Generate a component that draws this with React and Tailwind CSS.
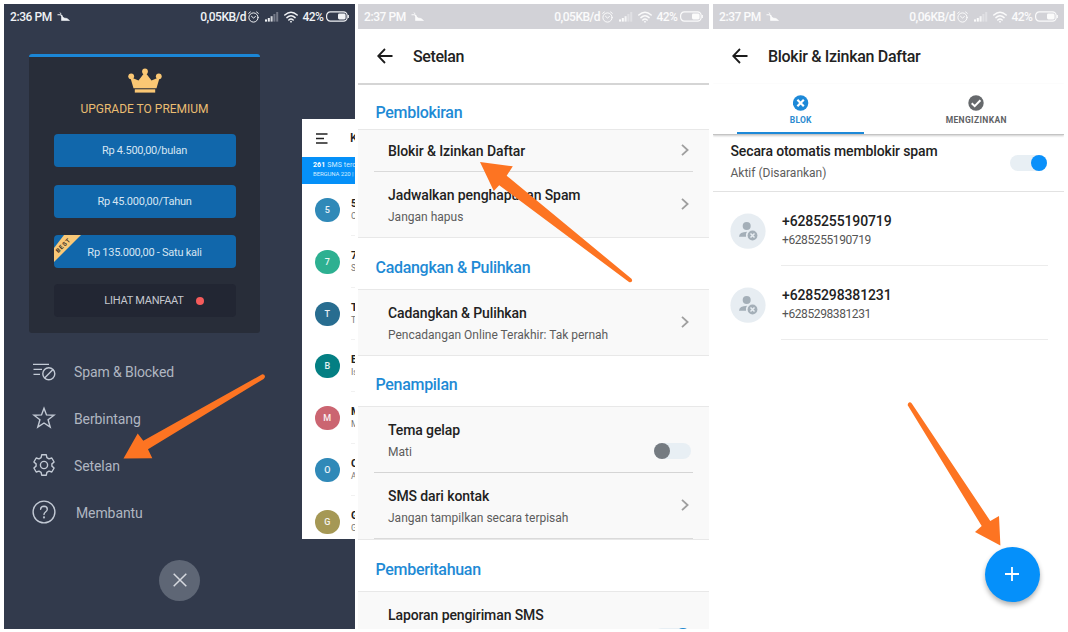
function StatusBar({ time, rate, className }) {
  return (
    <div className={`flex h-[25px] shrink-0 items-center pl-1.5 pr-[6px] text-[12px] font-medium leading-none ${className}`}>
      <span className="w-[42px] shrink-0 whitespace-nowrap tracking-[-0.4px]">{time}</span>
      <svg className="ml-[5px] shrink-0" width="13" height="10" viewBox="0 0 13 10" fill="none" stroke="currentColor">
        <path d="M3 0.5 L4.2 2.2" strokeWidth="0.9" />
        <path d="M0.5 2.8 H3.5 L5.5 4.2" strokeWidth="1.1" />
        <path d="M4.5 3.5 L7 6 L10 6.5 L12.5 8.5 H4.5 Z" fill="currentColor" strokeWidth="0.6" />
      </svg>
      <span className="ml-auto whitespace-nowrap tracking-[-0.5px]">{rate}</span>
      <svg className="ml-[2px] shrink-0" width="11" height="12" viewBox="0 0 11 12" fill="none" stroke="currentColor" strokeLinecap="round">
        <circle cx="5.5" cy="6.5" r="4.6" strokeWidth="1" />
        <path d="M0.7 2.3 L2.4 1 M10.3 2.3 L8.6 1 M3.5 5.3 L5.5 7 L7.4 5.6" strokeWidth="1" />
      </svg>
      <svg className="ml-[6px] shrink-0" width="14" height="10" viewBox="0 0 14 10" fill="currentColor">
        <rect x="0" y="7.4" width="2" height="2.2" />
        <rect x="2.8" y="6" width="2" height="3.6" />
        <rect x="5.6" y="4.2" width="2" height="5.4" opacity="0.85" />
        <rect x="8.4" y="2" width="2" height="7.6" opacity="0.35" />
        <rect x="11.2" y="0" width="2" height="9.6" opacity="0.35" />
      </svg>
      <svg className="ml-[5px] shrink-0" width="14" height="12" viewBox="0 0 14 12" fill="none" stroke="currentColor" strokeLinecap="round">
        <path d="M0.8 4 Q7 -1.6 13.2 4" strokeWidth="1.5" />
        <path d="M2.9 6.6 Q7 2.8 11.1 6.6" strokeWidth="1.5" />
        <path d="M4.8 9 Q7 7 9.2 9" strokeWidth="1.5" />
        <circle cx="7" cy="10.7" r="0.9" fill="currentColor" stroke="none" />
      </svg>
      <span className="ml-[4.5px] w-[20.5px] shrink-0 whitespace-nowrap tracking-[-0.6px]">42%</span>
      <svg className="ml-[3px] shrink-0" width="23" height="11" viewBox="0 0 23 11" fill="none">
        <rect x="0.6" y="0.9" width="20.6" height="9.2" rx="3.8" stroke="currentColor" strokeWidth="1.2" />
        <rect x="12" y="2.6" width="7.6" height="5.8" rx="1.4" fill="currentColor" />
        <path d="M22.4 4 V7" stroke="currentColor" strokeWidth="1" />
      </svg>
    </div>
  );
}

function PriceButton({ children, best }) {
  return (
    <div className="relative flex h-[33px] items-center justify-center overflow-hidden rounded-[4px] bg-[#1167ab] pt-[2px] text-[11px] tracking-[-0.25px] text-[#d5e5f2]">
      {best && (
        <svg className="absolute left-0 top-0" width="28" height="28" viewBox="0 0 28 28">
          <path d="M0 13 L10 0 H27 L0 27 Z" fill="#f9c877" />
          <text x="9.6" y="10.6" transform="rotate(-45 9.6 10.6)" textAnchor="middle" dominantBaseline="middle" fontSize="6" fontWeight="700" letterSpacing="0.9" fill="#3c3427">
            BEST
          </text>
        </svg>
      )}
      <span>{children}</span>
    </div>
  );
}

function MenuItem({ icon, label, className = "" }) {
  return (
    <div className="flex h-[47px] items-center">
      <div className="flex w-6 shrink-0 items-center justify-center pb-[3px]">{icon}</div>
      <span className={`ml-[18px] text-[14px] tracking-[-0.1px] text-[#b0b6c1] ${className}`}>{label}</span>
    </div>
  );
}

function SpamIcon() {
  return (
    <svg width="24" height="24" viewBox="0 0 24 24" fill="none" stroke="#c3cad5" strokeWidth="1.4">
      <path d="M1 5.4 H17 M1.5 10.4 H10 M1.5 15.4 H8" />
      <circle cx="16.8" cy="14.8" r="6" />
      <path d="M12.6 19 L21 10.6" />
    </svg>
  );
}

function StarIcon() {
  return (
    <svg width="24" height="24" viewBox="0 0 24 24" fill="none" stroke="#c3cad5" strokeWidth="1.4">
      <path d="M12 2.2 L14.5 8.9 L22 9.2 L16.1 13.7 L18.2 21.2 L12 17 L5.8 21.2 L7.9 13.7 L2 9.2 L9.5 8.9 Z" />
    </svg>
  );
}

function GearIcon() {
  return (
    <svg width="24" height="24" viewBox="0 0 24 24" fill="none" stroke="#c3cad5" strokeWidth="1.4" strokeLinejoin="round">
      <path d="M9.7 1.8 H14.3 L14.9 4.7 L17 5.9 L19.8 5 L22.1 9 L19.9 10.9 V13.1 L22.1 15 L19.8 19 L17 18.1 L14.9 19.3 L14.3 22.2 H9.7 L9.1 19.3 L7 18.1 L4.2 19 L1.9 15 L4.1 13.1 V10.9 L1.9 9 L4.2 5 L7 5.9 L9.1 4.7 Z" />
      <circle cx="12" cy="12" r="3.6" />
    </svg>
  );
}

function HelpIcon() {
  return (
    <svg width="24" height="24" viewBox="0 0 24 24" fill="none" stroke="#c3cad5" strokeWidth="1.4" strokeLinecap="round">
      <circle cx="12" cy="12" r="10.9" />
      <path d="M8.6 9.3 Q8.8 6.2 12 6.2 Q15.3 6.3 15.3 9.2 Q15.2 10.9 13.5 12 Q12 13 12 14.6" />
      <circle cx="12" cy="17.4" r="0.4" fill="#c3cad5" />
    </svg>
  );
}

const chats = [
  { letter: "5", color: "bg-[#3089b8]", name: "50", text: "Cek" },
  { letter: "7", color: "bg-[#2db091]", name: "77", text: "Se" },
  { letter: "T", color: "bg-[#286d90]", name: "Te", text: "Te" },
  { letter: "B", color: "bg-[#047f83]", name: "BR", text: "Isi" },
  { letter: "M", color: "bg-[#cb6571]", name: "M", text: "M" },
  { letter: "O", color: "bg-[#3089b8]", name: "OT", text: "An" },
  { letter: "G", color: "bg-[#a59855]", name: "Go", text: "Go" },
];

function InboxPeek() {
  return (
    <div className="h-[420px] w-[53px] shrink-0 overflow-hidden bg-white">
      <div className="w-[200px]">
        <div className="flex h-[38px] items-center pl-[14px]">
          <svg width="12" height="11" viewBox="0 0 12 11" stroke="#222" strokeWidth="1.3">
            <path d="M0 1 H11.5 M0 5.5 H8 M0 10 H11.5" />
          </svg>
          <span className="ml-[22px] text-[12.5px] font-medium text-[#222]">Kotak</span>
        </div>
        <div className="h-[27px] bg-[#0590f8] pl-[11px] pt-[4px] text-[#d3ecff]">
          <div className="text-[7px] leading-[9px] tracking-[0.1px]">
            <b className="text-white">261</b> SMS tercatat
          </div>
          <div className="text-[6px] leading-[8px] tracking-[-0.1px]">BERGUNA 220 | SPAM</div>
        </div>
        {chats.map((c, i) => (
          <div key={i} className="flex h-[52px] items-center pl-[13px]">
            <div className={`flex size-[24.5px] shrink-0 items-center justify-center rounded-full pt-px text-[9px] font-medium text-white/90 ${c.color}`}>
              {c.letter}
            </div>
            <div className="ml-[11.5px] flex h-full grow flex-col justify-center border-b border-[#f1f1f1]">
              <div className="text-[10.5px] font-bold leading-[13px] text-[#222]">{c.name}</div>
              <div className="text-[8.5px] leading-[13px] text-[#777]">{c.text}</div>
            </div>
          </div>
        ))}
      </div>
    </div>
  );
}

function DrawerScreen() {
  return (
    <div className="flex h-[625px] w-[351px] flex-col overflow-hidden bg-[#323a4c]">
      <StatusBar time="2:36 PM" rate="0,05KB/d" className="text-[#f0f2f5]" />
      <div className="flex h-[510px] shrink-0">
        <div className="w-[298px] pl-[25px] pt-[25px]">
          <div className="h-[279px] w-[231px] rounded-[3px] border-t-[3px] border-[#1b86d6] bg-[#282d39] px-[24.5px]">
            <svg className="mx-auto mt-[11px]" width="34" height="25" viewBox="0 0 34 25" fill="#fac774">
              <path d="M5.5 20.2 L2.2 9 L10.5 12.5 L17 4 L23.5 12.5 L31.8 9 L28.5 20.2 Z" />
              <path d="M6.8 21.3 H27.2 V24.6 H6.8 Z" />
              <circle cx="3.2" cy="8.3" r="2.9" />
              <circle cx="17" cy="3.4" r="2.9" />
              <circle cx="30.8" cy="8.3" r="2.9" />
            </svg>
            <div className="mt-[8px] text-center text-[12px] leading-4 text-[#eabd72]">UPGRADE TO PREMIUM</div>
            <div className="mt-[17px] flex flex-col gap-[17.7px]">
              <PriceButton>Rp 4.500,00/bulan</PriceButton>
              <PriceButton>Rp 45.000,00/Tahun</PriceButton>
              <PriceButton best>Rp 135.000,00 - Satu kali</PriceButton>
            </div>
            <div className="mt-[15.6px] flex h-[33px] items-center justify-center rounded-[4px] bg-[#222633] pl-[19px] pt-px text-[11px] tracking-[-0.25px] text-[#c5c8cf]">
              <span>LIHAT MANFAAT</span>
              <span className="ml-3 size-2 rounded-full bg-[#f55b5b]" />
            </div>
          </div>
          <div className="mt-[16px] pl-[3px]">
            <MenuItem icon={<SpamIcon />} label="Spam & Blocked" />
            <MenuItem icon={<StarIcon />} label="Berbintang" />
            <MenuItem icon={<GearIcon />} label="Setelan" />
            <MenuItem icon={<HelpIcon />} label="Membantu" className="pl-[2px]" />
          </div>
        </div>
        <div className="pt-[90px]">
          <InboxPeek />
        </div>
      </div>
      <div className="flex justify-center pt-[20.5px]">
        <div className="flex size-[41px] items-center justify-center rounded-full bg-[#5e6675]">
          <svg width="14" height="14" viewBox="0 0 14 14" stroke="#d6d9df" strokeWidth="1.5">
            <path d="M0.7 0.7 L13.3 13.3 M13.3 0.7 L0.7 13.3" />
          </svg>
        </div>
      </div>
    </div>
  );
}

function BackArrow() {
  return (
    <svg className="mb-px" width="16" height="16" viewBox="0 0 16 16" fill="none" stroke="#1c1c1c" strokeWidth="1.8">
      <path d="M15.5 8 H1.5 M8 1 L1.2 8 L8 15" />
    </svg>
  );
}

function Chevron() {
  return (
    <svg className="mb-[2px] shrink-0" width="8" height="12" viewBox="0 0 8 12" fill="none" stroke="#9f9f9f" strokeWidth="1.8">
      <path d="M1 0.8 L6.6 6 L1 11.2" />
    </svg>
  );
}

function Section({ title, className }) {
  return <div className={`bg-white pl-[17.5px] text-[16px] font-medium leading-5 tracking-[-0.3px] text-[#1e8ad5] ${className}`}>{title}</div>;
}

function Setting({ title, sub, action, className }) {
  return (
    <div className={`mx-4 flex items-center pl-[14px] ${className}`}>
      <div className={sub ? "grow pt-[2px]" : "grow"}>
        <div className="text-[14px] font-medium leading-[22px] tracking-[-0.1px] text-[#222]">{title}</div>
        {sub && <div className="text-[12px] leading-[22px] text-[#5c5c5c]">{sub}</div>}
      </div>
      {action}
    </div>
  );
}

function SettingsScreen() {
  return (
    <div className="h-[625px] w-[351px] overflow-hidden bg-white">
      <StatusBar time="2:37 PM" rate="0,05KB/d" className="bg-[#d2d2d7] text-white/90" />
      <div className="flex h-[56px] items-center border-b-2 border-[#d5d5d5] pl-[19px]">
        <BackArrow />
        <span className="ml-[20px] pt-[2px] text-[16px] font-medium tracking-[-0.4px] text-[#222]">Setelan</span>
      </div>
      <Section title="Pemblokiran" className="h-[44px] pt-[18px]" />
      <div className="border-y border-[#e8e8e8] bg-[#f9f9f9]">
        <Setting title="Blokir & Izinkan Daftar" action={<Chevron />} className="h-[42px] border-b border-[#dadada] pr-[4px]" />
        <Setting title="Jadwalkan penghapusan Spam" sub="Jangan hapus" action={<Chevron />} className="h-[65px] pr-[4px]" />
      </div>
      <Section title="Cadangkan & Pulihkan" className="h-[51px] pt-[20px]" />
      <div className="border-y border-[#e8e8e8] bg-[#f9f9f9]">
        <Setting title="Cadangkan & Pulihkan" sub="Pencadangan Online Terakhir: Tak pernah" action={<Chevron />} className="h-[65px] pr-[4px]" />
      </div>
      <Section title="Penampilan" className="h-[50px] pt-[19px]" />
      <div className="border-y border-[#e8e8e8] bg-[#f9f9f9]">
        <Setting
          title="Tema gelap"
          sub="Mati"
          className="h-[66px] border-b border-[#d5d5d5] pt-px"
          action={
            <div className="mr-[2px] mt-[22px] flex h-4 w-[37px] items-center rounded-full bg-[#e8eff4]">
              <div className="size-4 rounded-full bg-[#757b81]" />
            </div>
          }
        />
        <Setting title="SMS dari kontak" sub="Jangan tampilkan secara terpisah" action={<Chevron />} className="h-[66px] border-b border-[#dadada] pr-[4px]" />
      </div>
      <Section title="Pemberitahuan" className="h-[51px] pt-[20px]" />
      <div className="border-t border-[#e8e8e8] bg-[#f9f9f9]">
        <Setting
          title="Laporan pengiriman SMS"
          sub="Aktif"
          className="h-[65px]"
          action={
            <div className="mr-[2px] mt-[23px] flex h-4 w-[37px] items-center justify-end rounded-full bg-[#e8eff4]">
              <div className="size-4 rounded-full bg-[#1d86cf]" />
            </div>
          }
        />
      </div>
    </div>
  );
}

function BlockedAvatar() {
  return (
    <svg className="shrink-0" width="36" height="36" viewBox="0 0 36 36">
      <circle cx="18" cy="18.2" r="17.6" fill="#e7edf2" />
      <circle cx="16.7" cy="13" r="4" fill="#a4afb8" />
      <path d="M9 23.7 Q9.3 19 17 18.8 Q15.5 20.7 16 23.7 Z" fill="#a4afb8" />
      <circle cx="22.5" cy="22.5" r="4.9" fill="#a4afb8" />
      <path d="M20.5 20.5 L24.5 24.5 M24.5 20.5 L20.5 24.5" stroke="#e7edf2" strokeWidth="1.5" />
    </svg>
  );
}

function BlockedNumber({ number }) {
  return (
    <div className="flex h-[74px] pl-[17px] pr-4">
      <div className="pt-[21px]">
        <BlockedAvatar />
      </div>
      <div className="ml-[15px] grow border-b border-[#ececec] pl-[1px] pt-[20px]">
        <div className="text-[14px] font-medium leading-[18px] tracking-[-0.12px] text-[#222]">{number}</div>
        <div className="text-[12px] leading-[20px] tracking-[-0.4px] text-[#555]">{number}</div>
      </div>
    </div>
  );
}

function BlockListScreen() {
  return (
    <div className="relative h-[625px] w-[351px] overflow-hidden bg-white">
      <StatusBar time="2:37 PM" rate="0,06KB/d" className="bg-[#d2d2d7] text-white/90" />
      <div className="flex h-[55px] items-center pl-[19px]">
        <BackArrow />
        <span className="ml-[20px] pt-px text-[16px] font-medium tracking-[-0.3px] text-[#222]">Blokir &amp; Izinkan Daftar</span>
      </div>
      <div className="flex h-[51px] border-b border-[#c4c4c4] shadow-[0_1px_2px_rgba(0,0,0,0.2)]">
        <div className="flex w-1/2 flex-col items-center pt-[11px]">
          <svg className="shrink-0" width="16" height="16" viewBox="0 0 16 16">
            <circle cx="7.6" cy="8" r="7.7" fill="#1d89d8" />
            <path d="M4.4 4.8 L10.8 11.2 M10.8 4.8 L4.4 11.2" stroke="#fff" strokeWidth="2.2" />
          </svg>
          <span className="mt-[3px] text-[8.5px] font-bold leading-3 tracking-[0.25px] text-[#2b8bd0]">BLOK</span>
          <div className="mt-auto h-[2.5px] w-[127px] shrink-0 bg-[#1d89d8]" />
        </div>
        <div className="flex w-1/2 flex-col items-center pt-[11px]">
          <svg className="shrink-0" width="16" height="16" viewBox="0 0 16 16">
            <circle cx="8" cy="8" r="7.7" fill="#66696c" />
            <path d="M3.7 8.3 L6.7 11.2 L12.4 5.3" fill="none" stroke="#fff" strokeWidth="2" />
          </svg>
          <span className="mt-[3px] text-[8.5px] font-bold leading-3 tracking-[0.35px] text-[#5f6265]">MENGIZINKAN</span>
        </div>
      </div>
      <div className="flex h-[57px] justify-between border-b border-[#e2e2e2] pl-[17.5px] pr-[17.5px] pt-[5px]">
        <div>
          <div className="text-[14px] font-medium leading-[22px] tracking-[-0.13px] text-[#222]">Secara otomatis memblokir spam</div>
          <div className="text-[12px] leading-[22px] text-[#5c5c5c]">Aktif (Disarankan)</div>
        </div>
        <div className="mt-[15px] flex h-4 w-[37px] items-center justify-end rounded-full bg-[#e8eff4]">
          <div className="size-4 rounded-full bg-[#0a90fa]" />
        </div>
      </div>
      <BlockedNumber number="+6285255190719" />
      <BlockedNumber number="+6285298381231" />
      <div className="absolute bottom-[27.5px] right-[24.5px] flex size-[55px] items-center justify-center rounded-full bg-[#0590fa] shadow-[0_3px_5px_rgba(0,0,0,0.3)]">
        <svg width="14" height="14" viewBox="0 0 14 14" stroke="#fff" strokeWidth="1.8">
          <path d="M7 0 V14 M0 7 H14" />
        </svg>
      </div>
    </div>
  );
}

export default function App() {
  return (
    <div className="relative h-[632px] w-[1068px] overflow-hidden bg-white font-[Roboto,sans-serif]">
      <div className="flex pl-1 pt-1">
        <DrawerScreen />
        <div className="ml-[3px]">
          <SettingsScreen />
        </div>
        <div className="ml-1">
          <BlockListScreen />
        </div>
      </div>
      <svg className="pointer-events-none absolute left-0 top-0" width="1068" height="632" viewBox="0 0 1068 632" fill="#fd7422">
        <path d="M123.5 458.5 L137.7 433.5 L143.3 440.7 L262.3 374.3 Q264.6 374.2 265 376.2 Q265 378 263.6 378.9 L148 449.3 L152.3 458.3 Z" />
        <path d="M480 162 L512.8 166.3 L506.7 175.7 L631.5 278.8 Q632.6 280.4 631.8 281.6 Q630.6 282.8 629 282 L499.2 185.2 L493.8 191 Z" />
        <path d="M1000.4 545.4 L975 532 L981.7 526 L907.7 405.2 Q907.6 403 909 402.4 Q910.8 402 911.8 403.6 L990.3 521 L999 516 Z" />
      </svg>
    </div>
  );
}
